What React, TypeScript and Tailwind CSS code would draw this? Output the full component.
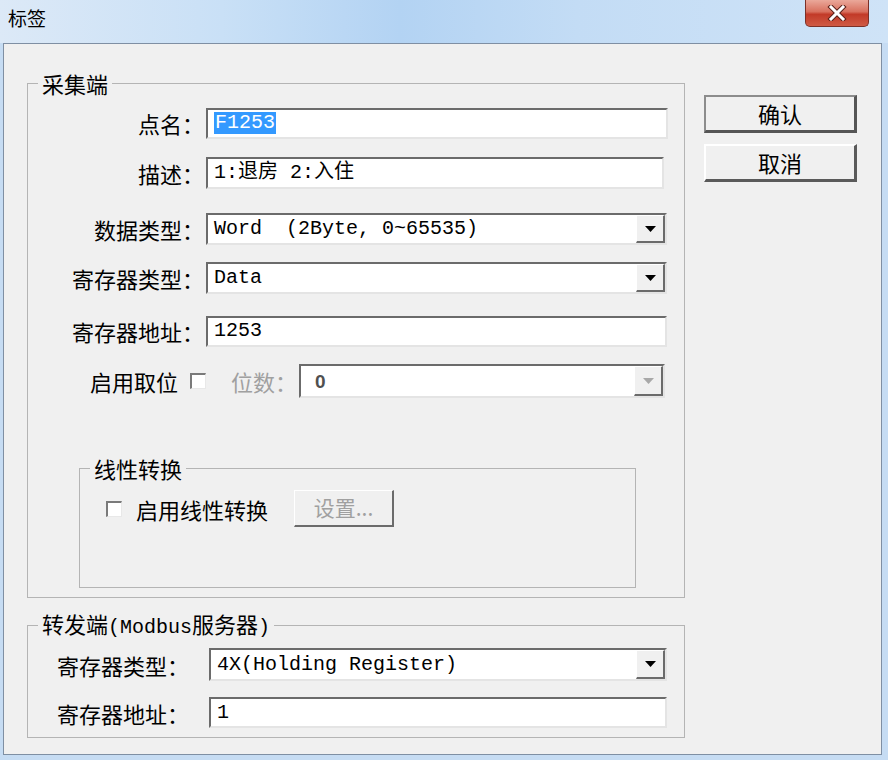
import React from "react";

const CJK = "font-['Noto_Sans_CJK_SC',sans-serif]";
const MONO = "font-['Liberation_Mono','Noto_Sans_CJK_SC',monospace]";

function Sunken({ className = "", children }: { className?: string; children?: React.ReactNode }) {
  return (
    <div
      className={
        "flex shrink-0 items-center bg-white border-t-2 border-l-2 border-b-2 border-r-2 border-t-[#6b6b6b] border-l-[#6b6b6b] border-b-[#e4e4e4] border-r-[#e4e4e4] " +
        className
      }
    >
      {children}
    </div>
  );
}

function Arrow({ disabled = false }: { disabled?: boolean }) {
  return (
    <div className="flex h-full w-[29px] items-center justify-center bg-[#f0f0f0] border-t border-l border-t-[#ffffff] border-l-[#ffffff] border-b-2 border-r-2 border-b-[#6b6b6b] border-r-[#6b6b6b]">
      <svg width="11" height="6" viewBox="0 0 11 6">
        <path d="M0 0 L11 0 L5.5 6 Z" fill={disabled ? "#a8a8a8" : "#000"} />
      </svg>
    </div>
  );
}

function Select({ text, className = "", disabled = false, sans = false }: { text: string; className?: string; disabled?: boolean; sans?: boolean }) {
  return (
    <Sunken className={"justify-between " + className}>
      <span
        className={
          (sans ? "font-['Liberation_Sans',sans-serif] font-bold text-[#505050] text-[19px] pl-[14px]" : MONO + " text-[20px] pl-[6px] text-black") +
          " whitespace-pre leading-none"
        }
      >
        {text}
      </span>
      <Arrow disabled={disabled} />
    </Sunken>
  );
}

function Checkbox() {
  return (
    <div className="h-[16px] w-[16px] shrink-0 bg-white border-t-2 border-l-2 border-b border-r border-t-[#7a7a7a] border-l-[#7a7a7a] border-b-[#e8e8e8] border-r-[#e8e8e8]" />
  );
}

function Label({ children, className = "" }: { children: React.ReactNode; className?: string }) {
  return <div className={"shrink-0 whitespace-nowrap text-[22px] leading-none text-black " + className}>{children}</div>;
}

export default function App() {
  return (
    <div className={"w-[888px] h-[760px] flex flex-col bg-[#c6dcf3] " + CJK}>
      {/* title bar */}
      <div className="relative h-[43px] shrink-0 bg-[linear-gradient(90deg,#dce9f7_0%,#c9e0f6_25%,#b3d3f3_45%,#c3dcf5_65%,#cfe3f7_100%)]">
        <div className="absolute left-[8px] top-[8px] text-[19px] leading-none text-black">标签</div>
        <div className="absolute left-[805px] top-0 h-[27px] w-[64px] rounded-b-[5px] border border-t-0 border-[#7b3027] bg-[linear-gradient(180deg,#eaa89a_0%,#d8705e_45%,#c23a28_55%,#cf5a44_100%)] flex items-center justify-center">
          <svg width="20" height="16" viewBox="0 0 20 16">
            <path d="M4 2 L16 14 M16 2 L4 14" stroke="#5a2018" strokeWidth="5" strokeLinecap="square" />
            <path d="M4 2 L16 14 M16 2 L4 14" stroke="#ffffff" strokeWidth="3" strokeLinecap="square" />
          </svg>
        </div>
      </div>

      {/* client */}
      <div className="ml-[3px] mr-[6px] h-[712px] shrink-0 border border-[#7f8fa3] bg-[#f0f0f0] flex pl-[23px] pt-[28px]">
        {/* left column */}
        <div className="w-[658px] shrink-0 flex flex-col">
          {/* 采集端 */}
          <fieldset className="h-[526px] border border-[#b4b4b4] flex flex-col">
            <legend className="ml-[10px] px-[4px] text-[22px] leading-[22px] text-black">采集端</legend>

            <div className="mt-[13px] flex h-[32px] items-center">
              <Label className="w-[178px] text-right pr-[2px]">点名：</Label>
              <Sunken className="h-[31px] w-[462px]">
                <span className={MONO + " ml-[6px] text-[20px] leading-[22px] bg-[#3399ff] text-white px-[1px]"}>F1253</span>
              </Sunken>
            </div>

            <div className="mt-[18px] flex h-[32px] items-center">
              <Label className="w-[178px] text-right pr-[2px]">描述：</Label>
              <Sunken className="h-[32px] w-[458px]">
                <span className={MONO + " ml-[6px] text-[20px] leading-none text-black whitespace-pre"}>1:退房 2:入住</span>
              </Sunken>
            </div>

            <div className="mt-[24px] flex h-[32px] items-center">
              <Label className="w-[178px] text-right pr-[2px]">数据类型：</Label>
              <Select className="h-[32px] w-[461px]" text="Word  (2Byte, 0~65535)" />
            </div>

            <div className="mt-[17px] flex h-[32px] items-center">
              <Label className="w-[178px] text-right pr-[2px]">寄存器类型：</Label>
              <Select className="h-[32px] w-[461px]" text="Data" />
            </div>

            <div className="mt-[21px] flex h-[32px] items-center">
              <Label className="w-[178px] text-right pr-[2px]">寄存器地址：</Label>
              <Sunken className="h-[31px] w-[461px]">
                <span className={MONO + " ml-[6px] text-[20px] leading-none text-black"}>1253</span>
              </Sunken>
            </div>

            <div className="mt-[17px] flex h-[34px] items-center">
              <div className="w-[178px] shrink-0 flex items-center justify-end">
                <Label>启用取位</Label>
                <div className="ml-[12px]">
                  <Checkbox />
                </div>
              </div>
              <Label className="ml-[25px] !text-[#a0a0a0]">位数：</Label>
              <Select className="ml-[2px] h-[34px] w-[366px]" text="0" disabled sans />
            </div>

            {/* 线性转换 */}
            <fieldset className="mt-[59px] ml-[51px] h-[131px] w-[557px] border border-[#b4b4b4] flex flex-col">
              <legend className="ml-[10px] px-[4px] text-[22px] leading-[22px] text-black">线性转换</legend>
              <div className="mt-[11px] flex items-center h-[37px]">
                <div className="ml-[26px]">
                  <Checkbox />
                </div>
                <Label className="ml-[14px]">启用线性转换</Label>
                <div className="ml-[26px] h-[37px] w-[100px] shrink-0 flex items-center justify-center text-[21px] text-[#a0a0a0] border-t border-l border-t-white border-l-white border-b-2 border-r-2 border-b-[#6b6b6b] border-r-[#6b6b6b]">
                  设置...
                </div>
              </div>
            </fieldset>
          </fieldset>

          {/* 转发端 */}
          <fieldset className="mt-[14px] h-[126px] border border-[#b4b4b4] flex flex-col">
            <legend className="ml-[10px] px-[4px] text-[22px] leading-[22px] text-black whitespace-pre">
              转发端<span className={MONO + " text-[20px]"}>(Modbus</span>服务器<span className={MONO + " text-[20px]"}>)</span>
            </legend>
            <div className="mt-[9px] flex h-[33px] items-center">
              <Label className="w-[181px] pl-[29px]">寄存器类型：</Label>
              <Select className="h-[33px] w-[458px]" text="4X(Holding Register)" />
            </div>
            <div className="mt-[16px] flex h-[31px] items-center">
              <Label className="w-[181px] pl-[29px]">寄存器地址：</Label>
              <Sunken className="h-[31px] w-[458px]">
                <span className={MONO + " ml-[6px] text-[20px] leading-none text-black"}>1</span>
              </Sunken>
            </div>
          </fieldset>
        </div>

        {/* right column */}
        <div className="ml-[19px] mt-[23px] flex flex-col">
          <div className="h-[38px] w-[153px] flex items-center justify-center text-[22px] text-black border-t-2 border-l-2 border-t-[#8c8c8c] border-l-[#8c8c8c] border-b-[3px] border-r-[3px] border-b-[#555555] border-r-[#555555]">
            确认
          </div>
          <div className="mt-[11px] h-[38px] w-[153px] flex items-center justify-center text-[22px] text-black border-t-2 border-l-2 border-t-white border-l-white border-b-[3px] border-r-[3px] border-b-[#5a5a5a] border-r-[#5a5a5a]">
            取消
          </div>
        </div>
      </div>
    </div>
  );
}
